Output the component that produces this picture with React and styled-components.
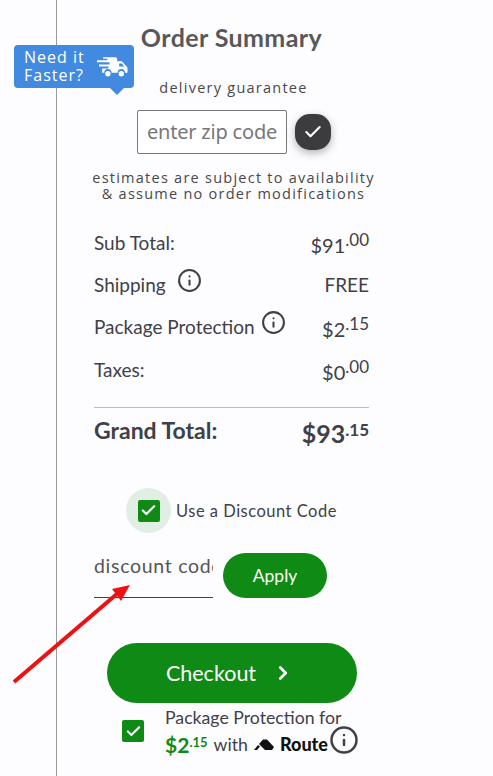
import React from "react";
import styled, { createGlobalStyle } from "styled-components";
import { Check, ChevronRight, Info } from "lucide-react";

const GlobalStyle = createGlobalStyle`
  html, body {
    margin: 0;
    padding: 0;
    background: #fdfdff;
  }
  * {
    box-sizing: border-box;
  }
`;

const Page = styled.div`
  position: relative;
  width: 493px;
  height: 776px;
  overflow: hidden;
  padding-left: 56px;
  font-family: "Lato", "Liberation Sans", sans-serif;
  color: #404048;
`;

const Summary = styled.div`
  width: 351px;
  height: 776px;
  border-left: 1px solid #9a9a9e;
  padding: 21px 38px 0 37px;
  display: flex;
  flex-direction: column;
`;

const Title = styled.h2`
  margin: 0;
  height: 32px;
  line-height: 32px;
  font-size: 25px;
  font-weight: 700;
  color: #58585a;
  text-align: center;
  letter-spacing: 0.4px;
`;

const SmallNote = styled.div`
  font-family: "Open Sans", sans-serif;
  font-size: 14.5px;
  line-height: 16px;
  letter-spacing: 1.25px;
  color: #48484c;
  text-align: center;
  white-space: nowrap;
  margin: ${(p) => p.$top}px -12px 0 -8px;
`;

const ZipRow = styled.div`
  display: flex;
  align-items: center;
  gap: 8px;
  margin: 14px 0 0 43px;
`;

const ZipInput = styled.div`
  width: 150px;
  height: 44px;
  border: 1px solid #77777a;
  border-radius: 2px;
  background: #fff;
  font-family: "Noto Sans", sans-serif;
  font-size: 20px;
  line-height: 42px;
  color: #77777a;
  text-align: center;
  white-space: nowrap;
  letter-spacing: -0.2px;
`;

const ZipButton = styled.div`
  width: 36px;
  height: 36px;
  border-radius: 15px;
  background: #3c3c3e;
  color: #fff;
  display: flex;
  align-items: center;
  justify-content: center;
  box-shadow: 0 3px 8px rgba(0, 0, 0, 0.3);
`;

const Rows = styled.div`
  margin-top: 19px;
  display: flex;
  flex-direction: column;
`;

const Row = styled.div`
  display: flex;
  justify-content: space-between;
  align-items: center;
  height: ${(p) => p.$height || 42}px;
  font-size: 19px;
`;

const Label = styled.span`
  display: flex;
  align-items: center;
  gap: ${(p) => p.$gap || 0}px;
`;

const InfoMark = styled(Info)`
  width: 25px;
  height: 25px;
  color: #404048;
  position: relative;
  top: -4px;
`;

const Amount = styled.span`
  font-size: ${(p) => (p.$big ? 25 : 20)}px;
  font-weight: ${(p) => (p.$big ? 700 : 400)};
  position: relative;
  top: 3px;
`;

const Cents = styled.sup`
  font-size: 17px;
  line-height: 0;
  vertical-align: 7px;
`;

const Divider = styled.hr`
  margin: 16px 0 0;
  border: 0;
  border-top: 1px solid #bdbdc2;
`;

const GrandRow = styled(Row)`
  font-size: 23px;
  font-weight: 700;
`;

const DiscountToggle = styled.div`
  margin: 36px 0 0 32px;
  display: flex;
  align-items: center;
  gap: 5px;
  font-size: 16.5px;
  letter-spacing: 0.5px;
`;

const Halo = styled.div`
  width: 45px;
  height: 45px;
  border-radius: 50%;
  background: #e1eee3;
  display: flex;
  align-items: center;
  justify-content: center;
`;

const Box = styled.div`
  width: 22px;
  height: 22px;
  border-radius: 2px;
  background: #0f8a14;
  color: #fff;
  display: flex;
  align-items: center;
  justify-content: center;
`;

const DiscountRow = styled.div`
  margin-top: 20px;
  display: flex;
  align-items: flex-end;
  gap: 10px;
`;

const DiscountInput = styled.div`
  width: 119px;
  height: 45px;
  border-bottom: 1px solid #404048;
  overflow: hidden;
  white-space: nowrap;
  font-size: 19.5px;
  line-height: 26px;
  letter-spacing: 0.7px;
  color: #55555a;
`;

const ApplyButton = styled.div`
  width: 104px;
  height: 45px;
  border-radius: 23px;
  background: #0f8a14;
  color: #fff;
  font-size: 17.5px;
  line-height: 45px;
  text-align: center;
`;

const CheckoutButton = styled.div`
  margin: 45px 0 0 13px;
  width: 250px;
  height: 60px;
  padding-right: 4px;
  border-radius: 30px;
  background: #0f8a14;
  color: #fff;
  font-size: 21.5px;
  display: flex;
  align-items: center;
  justify-content: center;
  gap: 16px;
`;

const ProtectionRow = styled.div`
  margin: 1px 0 0 28px;
  display: flex;
  align-items: center;
  gap: 21px;
`;

const ProtectionText = styled.div`
  font-size: 17.7px;
  line-height: 27px;
  white-space: nowrap;
`;

const ProtectionLine = styled.div`
  display: flex;
  align-items: center;
  gap: 6px;
`;

const GreenPrice = styled.span`
  font-size: 21px;
  font-weight: 700;
  color: #0f8a14;
`;

const GreenCents = styled.sup`
  font-size: 13px;
  line-height: 0;
  vertical-align: 6px;
`;

const RouteName = styled.span`
  font-size: 18px;
  font-weight: 900;
  color: #111;
`;

const Badge = styled.div`
  position: absolute;
  left: 14px;
  top: 45px;
  width: 120px;
  height: 43px;
  border-radius: 4px;
  background: #428ae0;
  color: #fff;
  padding: 3px 0 0 10px;
  font-family: "Open Sans", sans-serif;
  font-size: 16px;
  line-height: 18px;
  letter-spacing: 1px;
  &::after {
    content: "";
    position: absolute;
    left: 96px;
    bottom: -7px;
    border-left: 7px solid transparent;
    border-right: 7px solid transparent;
    border-top: 7px solid #428ae0;
  }
`;

const Truck = styled.svg`
  position: absolute;
  right: 6px;
  top: 10px;
  width: 31px;
  height: 23px;
`;

const Arrow = styled.svg`
  position: absolute;
  left: 0;
  top: 570px;
  width: 140px;
  height: 120px;
`;

const InfoFloat = styled(Info)`
  width: 30px;
  height: 30px;
  color: #404048;
  position: absolute;
  left: 329px;
  top: 725px;
`;

const Money = ({ whole, cents, big }) => (
  <Amount $big={big}>
    {whole}
    <Cents>.{cents}</Cents>
  </Amount>
);

export default function App() {
  return (
    <Page>
      <GlobalStyle />
      <Summary>
        <Title>Order Summary</Title>
        <SmallNote $top={27}>delivery guarantee</SmallNote>
        <ZipRow>
          <ZipInput>enter zip code</ZipInput>
          <ZipButton>
            <Check size={20} strokeWidth={2.5} />
          </ZipButton>
        </ZipRow>
        <SmallNote $top={16}>estimates are subject to availability</SmallNote>
        <SmallNote $top={0}>&amp; assume no order modifications</SmallNote>
        <Rows>
          <Row>
            <Label>Sub Total:</Label>
            <Money whole="$91" cents="00" />
          </Row>
          <Row>
            <Label $gap={11}>
              Shipping <InfoMark />
            </Label>
            <Label>FREE</Label>
          </Row>
          <Row>
            <Label $gap={6}>
              Package Protection <InfoMark />
            </Label>
            <Money whole="$2" cents="15" />
          </Row>
          <Row $height={44}>
            <Label>Taxes:</Label>
            <Money whole="$0" cents="00" />
          </Row>
          <Divider />
          <GrandRow $height={44}>
            <Label>Grand Total:</Label>
            <Money whole="$93" cents="15" big />
          </GrandRow>
        </Rows>
        <DiscountToggle>
          <Halo>
            <Box>
              <Check size={17} strokeWidth={3} />
            </Box>
          </Halo>
          Use a Discount Code
        </DiscountToggle>
        <DiscountRow>
          <DiscountInput>discount code</DiscountInput>
          <ApplyButton>Apply</ApplyButton>
        </DiscountRow>
        <CheckoutButton>
          Checkout
          <ChevronRight size={22} strokeWidth={3} />
        </CheckoutButton>
        <ProtectionRow>
          <Box>
            <Check size={17} strokeWidth={3} />
          </Box>
          <ProtectionText>
            Package Protection for
            <ProtectionLine>
              <GreenPrice>
                $2<GreenCents>.15</GreenCents>
              </GreenPrice>
              with
              <svg width="20" height="12" viewBox="0 0 20 12">
                <path d="M0 11 L4 6 L6 7.5 L3 11 Z M5 5 L9 0.5 L13 0.5 L20 8 L18 11 L11 11 Z" fill="#111" />
              </svg>
              <RouteName>Route</RouteName>
            </ProtectionLine>
          </ProtectionText>
        </ProtectionRow>
      </Summary>
      <InfoFloat />
      <Badge>
        Need it
        <br />
        Faster?
        <Truck viewBox="0 0 30 22">
          <path
            d="M6 2 H18 a1.5 1.5 0 0 1 1.5 1.5 V6 H24 L29.5 12 V17 H27 a3.5 3.5 0 0 0 -7 0 H14 a3.5 3.5 0 0 0 -7 0 H5 V13 H11 V11 H2 V9 H12 V7 H0 V5 H10 V3.5 H6 Z"
            fill="#fff"
          />
          <circle cx="10.5" cy="18" r="2.6" fill="#fff" />
          <circle cx="23.5" cy="18" r="2.6" fill="#fff" />
          <path d="M21.5 8 H24 L26.5 11 H21.5 Z" fill="#428ae0" />
        </Truck>
      </Badge>
      <Arrow viewBox="0 0 140 120">
        <line x1="14" y1="112" x2="118" y2="23" stroke="#ee1111" strokeWidth="4" />
        <path d="M130 15 L112 19 L121 31 Z" fill="#ee1111" />
      </Arrow>
    </Page>
  );
}
